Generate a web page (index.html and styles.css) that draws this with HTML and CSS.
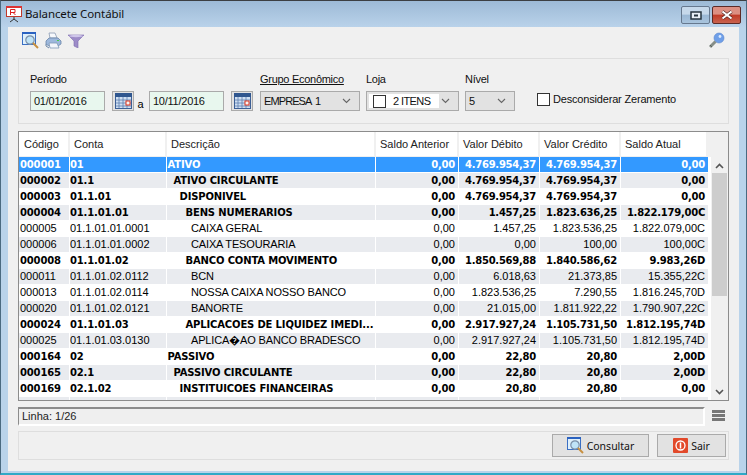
FILE: index.html
```html
<!DOCTYPE html>
<html lang="pt-BR">
<head>
<meta charset="utf-8">
<title>Balancete Contábil</title>
<link rel="stylesheet" href="styles.css">
</head>
<body>
<div class="window">
  <header class="titlebar">
    <svg class="app-icon" width="16" height="17" viewBox="0 0 16 17"><rect x="0.5" y="0.5" width="15" height="10" fill="#fff" stroke="#c0392b"/><rect x="0" y="0" width="16" height="2" fill="#d33"/><path d="M4.500 9V3.500h4.500v3H4.500M7 6.500l2.500 2.500" stroke="#d22" fill="none"/><path d="M8 11v2M8 13l-4 3M8 13l4 3" stroke="#333"/></svg>
    <span class="title">Balancete Contábil</span>
    <div class="win-btns">
      <div class="win-btn restore"><svg width="12" height="9" viewBox="0 0 12 9"><rect x="1" y="1" width="10" height="7" fill="#e8eff6" stroke="#27343f" stroke-width="1.500"/><rect x="4" y="3.500" width="4" height="2" fill="#27343f"/></svg></div>
      <div class="win-btn close"><svg width="14" height="10" viewBox="0 0 14 10"><path d="M2.500 1.500l9 7M11.500 1.500l-9 7" stroke="#4a1f1a" stroke-width="3.400"/><path d="M2.500 1.500l9 7M11.500 1.500l-9 7" stroke="#fff" stroke-width="2.200"/></svg></div>
    </div>
  </header>
  <main class="client">
    <div class="toolbar">
      <svg width="17" height="17" viewBox="0 0 17 17"><rect x="0.5" y="0.5" width="13" height="12" fill="#dff0fb" stroke="#3a6fc4"/><rect x="0" y="0" width="14" height="2" fill="#2b62c0"/><circle cx="8" cy="8" r="4.2" fill="#bfe3f7" stroke="#7a8fa8" stroke-width="1.2"/><path d="M11 11l5 5" stroke="#c89040" stroke-width="2"/></svg>
      <svg width="17" height="17" viewBox="0 0 17 17"><path d="M4 1h6l2 5H5z" fill="#f7f9fc" stroke="#8a9bb2" stroke-width="0.800"/><path d="M1 9l3-3h9l3 3v3l-3 2H4l-3-2z" fill="#9db8dc" stroke="#6b86a8" stroke-width="0.800"/><path d="M4 11h8l2 5H5z" fill="#f2f6fb" stroke="#7f97b6" stroke-width="0.800"/><path d="M1 12v2l3 2" fill="none" stroke="#6b86a8"/><rect x="12" y="8" width="2" height="1" fill="#4c4"/></svg>
      <svg width="16" height="14" viewBox="0 0 16 14"><path d="M0 1h16L10 7v7L6 12V7z" fill="#9d8cc8" stroke="#7d6cb0" stroke-width="0.6"/><ellipse cx="8" cy="2" rx="7" ry="1.2" fill="#cfc6ea"/></svg>
      <span class="spacer"></span>
      <svg width="17" height="17" viewBox="0 0 17 17"><circle cx="11" cy="6" r="5" fill="#6f9fe8" stroke="#5a86cc" stroke-width="0.6"/><circle cx="12" cy="4.5" r="1.4" fill="#dcebff"/><path d="M7.5 9.5L2 15" stroke="#868e88" stroke-width="3"/><path d="M2 13l2 2" stroke="#5c625e"/></svg>
    </div>

    <section class="filters">
      <div class="field f-date">
        <label class="lbl">Período</label>
        <div class="date-row">
          <div class="input date">01/01/2016</div>
          <button class="cal-btn"><svg width="17" height="16" viewBox="0 0 17 16"><rect x="0.5" y="1.5" width="16" height="14" fill="#cfdff2" stroke="#3d5f95"/><rect x="0" y="0" width="17" height="4" fill="#2f568f"/><path d="M4 4v11M8 4v11M12 4v11M1 7h15M1 10h15M1 13h15" stroke="#5d7db0" stroke-width="0.8"/><rect x="11" y="8" width="4" height="4" fill="#f5f5f5" stroke="#e0351c"/></svg></button>
          <span class="sep">a</span>
          <div class="input date">10/11/2016</div>
          <button class="cal-btn"><svg width="17" height="16" viewBox="0 0 17 16"><rect x="0.5" y="1.5" width="16" height="14" fill="#cfdff2" stroke="#3d5f95"/><rect x="0" y="0" width="17" height="4" fill="#2f568f"/><path d="M4 4v11M8 4v11M12 4v11M1 7h15M1 10h15M1 13h15" stroke="#5d7db0" stroke-width="0.8"/><rect x="11" y="8" width="4" height="4" fill="#f5f5f5" stroke="#e0351c"/></svg></button>
        </div>
      </div>
      <div class="field f-grupo">
        <label class="lbl underline">Grupo Econômico</label>
        <div class="input select w100"><span class="caps">EMPRESA 1</span><svg class="chev" width="9" height="6" viewBox="0 0 9 6"><path d="M1 1l3.500 3.500L8 1" fill="none" stroke="#666" stroke-width="1.100"/></svg></div>
      </div>
      <div class="field f-loja">
        <label class="lbl">Loja</label>
        <div class="input select w93"><span class="loja-inner"><span class="box"></span><span class="caps-s">2 ITENS</span></span><svg class="chev" width="9" height="6" viewBox="0 0 9 6"><path d="M1 1l3.500 3.500L8 1" fill="none" stroke="#666" stroke-width="1.100"/></svg></div>
      </div>
      <div class="field f-nivel">
        <label class="lbl">Nível</label>
        <div class="input select w50"><span>5</span><svg class="chev" width="9" height="6" viewBox="0 0 9 6"><path d="M1 1l3.500 3.500L8 1" fill="none" stroke="#666" stroke-width="1.100"/></svg></div>
      </div>
      <div class="check"><span class="box"></span><span class="check-text">Desconsiderar Zeramento</span></div>
    </section>

    <section class="grid">
      <div class="grid-body">
        <table class="data">
          <colgroup><col class="c1"><col class="c2"><col class="c3"><col class="c4"><col class="c5"><col class="c6"><col class="c7"></colgroup>
          <thead><tr><th>Código</th><th>Conta</th><th>Descrição</th><th>Saldo Anterior</th><th>Valor Débito</th><th>Valor Crédito</th><th>Saldo Atual</th></tr></thead>
          <tbody>
            <tr class="b sel"><td>000001</td><td>01</td><td class="l0">ATIVO</td><td class="n">0,00</td><td class="n">4.769.954,37</td><td class="n">4.769.954,37</td><td class="n">0,00</td></tr>
            <tr class="b alt"><td>000002</td><td>01.1</td><td class="l1">ATIVO CIRCULANTE</td><td class="n">0,00</td><td class="n">4.769.954,37</td><td class="n">4.769.954,37</td><td class="n">0,00</td></tr>
            <tr class="b"><td>000003</td><td>01.1.01</td><td class="l2">DISPONIVEL</td><td class="n">0,00</td><td class="n">4.769.954,37</td><td class="n">4.769.954,37</td><td class="n">0,00</td></tr>
            <tr class="b alt"><td>000004</td><td>01.1.01.01</td><td class="l3">BENS NUMERARIOS</td><td class="n">0,00</td><td class="n">1.457,25</td><td class="n">1.823.636,25</td><td class="n">1.822.179,00C</td></tr>
            <tr><td>000005</td><td>01.1.01.01.0001</td><td class="l4">CAIXA GERAL</td><td class="n">0,00</td><td class="n">1.457,25</td><td class="n">1.823.536,25</td><td class="n">1.822.079,00C</td></tr>
            <tr class="alt"><td>000006</td><td>01.1.01.01.0002</td><td class="l4">CAIXA TESOURARIA</td><td class="n">0,00</td><td class="n">0,00</td><td class="n">100,00</td><td class="n">100,00C</td></tr>
            <tr class="b"><td>000008</td><td>01.1.01.02</td><td class="l3">BANCO CONTA MOVIMENTO</td><td class="n">0,00</td><td class="n">1.850.569,88</td><td class="n">1.840.586,62</td><td class="n">9.983,26D</td></tr>
            <tr class="alt"><td>000011</td><td>01.1.01.02.0112</td><td class="l4">BCN</td><td class="n">0,00</td><td class="n">6.018,63</td><td class="n">21.373,85</td><td class="n">15.355,22C</td></tr>
            <tr><td>000013</td><td>01.1.01.02.0114</td><td class="l4">NOSSA CAIXA NOSSO BANCO</td><td class="n">0,00</td><td class="n">1.823.536,25</td><td class="n">7.290,55</td><td class="n">1.816.245,70D</td></tr>
            <tr class="alt"><td>000020</td><td>01.1.01.02.0121</td><td class="l4">BANORTE</td><td class="n">0,00</td><td class="n">21.015,00</td><td class="n">1.811.922,22</td><td class="n">1.790.907,22C</td></tr>
            <tr class="b"><td>000024</td><td>01.1.01.03</td><td class="l3">APLICACOES DE LIQUIDEZ IMEDI...</td><td class="n">0,00</td><td class="n">2.917.927,24</td><td class="n">1.105.731,50</td><td class="n">1.812.195,74D</td></tr>
            <tr class="alt"><td>000025</td><td>01.1.01.03.0130</td><td class="l4">APLICA�AO BANCO BRADESCO</td><td class="n">0,00</td><td class="n">2.917.927,24</td><td class="n">1.105.731,50</td><td class="n">1.812.195,74D</td></tr>
            <tr class="b"><td>000164</td><td>02</td><td class="l0">PASSIVO</td><td class="n">0,00</td><td class="n">22,80</td><td class="n">20,80</td><td class="n">2,00D</td></tr>
            <tr class="b alt"><td>000165</td><td>02.1</td><td class="l1">PASSIVO CIRCULANTE</td><td class="n">0,00</td><td class="n">22,80</td><td class="n">20,80</td><td class="n">2,00D</td></tr>
            <tr class="b"><td>000169</td><td>02.1.02</td><td class="l2">INSTITUICOES FINANCEIRAS</td><td class="n">0,00</td><td class="n">20,80</td><td class="n">20,80</td><td class="n">0,00</td></tr>
            <tr class="alt"><td></td><td></td><td></td><td></td><td></td><td></td><td></td></tr>
          </tbody>
        </table>
      </div>
      <div class="scroll">
        <svg width="9" height="6" viewBox="0 0 9 6"><path d="M1 5l3.500-3.500L8 5" fill="none" stroke="#555" stroke-width="1.600"/></svg>
        <div class="track"><div class="thumb"></div></div>
        <svg width="9" height="6" viewBox="0 0 9 6"><path d="M1 1l3.500 3.500L8 1" fill="none" stroke="#555" stroke-width="1.600"/></svg>
      </div>
    </section>

    <div class="status-row">
      <div class="status">Linha: 1/26</div>
      <div class="menu-ico"><span></span><span></span><span></span></div>
    </div>

    <footer class="actions">
      <button class="btn b-cons"><svg width="17" height="17" viewBox="0 0 17 17"><rect x="0.5" y="0.500" width="13" height="12" fill="#dff0fb" stroke="#3a6fc4"/><rect x="0" y="0" width="14" height="2" fill="#2b62c0"/><circle cx="8" cy="8" r="4.200" fill="#bfe3f7" stroke="#7a8fa8" stroke-width="1.200"/><path d="M11 11l5 5" stroke="#c89040" stroke-width="2"/></svg><span>Consultar</span></button>
      <button class="btn b-sair"><svg width="15" height="15" viewBox="0 0 15 15"><rect width="15" height="15" rx="1" fill="#e2492a"/><circle cx="7.500" cy="7.500" r="4.500" fill="none" stroke="#fff" stroke-width="1.300"/><path d="M7.500 4.500v6" stroke="#fff" stroke-width="1.500"/></svg><span>Sair</span></button>
    </footer>
  </main>
</div>
</body>
</html>
```

FILE: styles.css
```css
html, body { margin: 0; padding: 0; height: 100%; background: #fff; }
body { font-family: "Liberation Sans", Arial, sans-serif; font-size: 11px; color: #000; overflow: hidden; }
* { box-sizing: border-box; }
.window {
  width: 747px; height: 475px; display: flex; flex-direction: column;
  background: #b9d3ea; border-top: 1px solid #3c3f42; border-left: 1px solid #4a6a80; border-right: 1px solid #4a6a80;
  border-bottom: 2px solid #2fa9c6;
}
.titlebar {
  height: 26px; flex: none; display: flex; align-items: flex-start; padding-left: 5px;
  background: linear-gradient(#9dbad6, #b9d2ea);
}
.app-icon { margin-top: 5px; }
.title { font-family: "Noto Sans", sans-serif; font-size: 11.500px; letter-spacing: -0.1px; margin: 5px 0 0 3px; color: #111; line-height: 16px; }
.win-btns { margin-left: auto; margin-right: 5px; display: flex; gap: 2px; }
.win-btn { height: 18px; margin-top: 5px; border: 1px solid #66788e; border-radius: 2px; display: flex; align-items: center; justify-content: center; }
.restore { width: 29px; background: linear-gradient(#c6d8ea 45%, #9ab7d4 50%, #a9c4dd); }
.close { width: 29px; background: linear-gradient(#dc8f82 45%, #c03a26 50%, #c9624e); border-color: #5c2a26; }

.client {
  flex: 1; margin: 0 7px 2px 7px; background: #f0f0f0; padding: 3px 10px 8px 10px;
  display: flex; flex-direction: column; min-height: 0;
}
.toolbar { height: 21px; display: flex; align-items: center; gap: 6px; padding-left: 4px; padding-right: 4px; flex: none; }
.spacer { flex: 1; }

.filters {
  margin-top: 7px; height: 66px; flex: none; border: 1px solid #dedede; display: flex; align-items: flex-start;
  padding: 13px 0 0 11px;
}
.field { display: flex; flex-direction: column; }
.lbl { height: 14px; line-height: 14px; color: #111; margin-bottom: 5px; letter-spacing: -0.28px; align-self: flex-start; }
.underline { text-decoration: underline; }
.input { height: 20px; border: 1px solid #aaa; line-height: 18px; padding-left: 3px; color: #111; }
.date { width: 75px; background: #e8f7ee; letter-spacing: -0.25px; }
.date-row { display: flex; align-items: center; }
.cal-btn { width: 22px; height: 20px; margin: 0 0 0 7px; padding: 0; border: 1px solid #aaa; background: #e2e2e2; display: flex; align-items: center; justify-content: center; }
.sep { width: 15px; text-align: center; padding: 6px 2px 0 0; }
.select { background: #e2e2e2; display: flex; align-items: center; justify-content: space-between; padding-right: 8px; }
.w100 { width: 100px; }
.w93 { width: 93px; }
.w50 { width: 50px; }
.f-date { width: 230px; }
.f-grupo { width: 106px; }
.f-loja { width: 99px; }
.f-nivel { width: 72px; }
.caps { letter-spacing: -0.9px; word-spacing: 2px; }
.caps-s { letter-spacing: -0.6px; }
.loja-inner { background: #fff; display: flex; align-items: center; gap: 7px; width: 70px; height: 14px; padding-left: 4px; margin-left: -1px; }
.box { width: 13px; height: 13px; border: 1px solid #333; background: #fff; display: inline-block; flex: none; }
.check { display: flex; align-items: center; gap: 3px; margin-top: 20px; height: 14px; color: #111; }
.check-text { letter-spacing: -0.18px; line-height: 12px; }

.grid {
  margin-top: 7px; height: 270px; flex: none; border: 1px solid #8c8c8c; display: flex; background: #f0f0f0;
}
.grid-body { width: 692px; flex: none; overflow: hidden; background: #f0f0f0; }
.data { border-collapse: separate; border-spacing: 0; table-layout: fixed; width: 692px; }
.c1 { width: 51px; } .c2 { width: 97px; } .c3 { width: 209px; } .c4 { width: 83px; } .c5 { width: 81px; } .c6 { width: 81px; } .c7 { width: 90px; }
th {
  height: 25px; padding: 0 0 0 4px; font-weight: normal; text-align: left; color: #222; background: #fff;
  border-right: 2px solid #f0f0f0; border-bottom: 1px solid #f0f0f0; white-space: nowrap; overflow: hidden;
}
th:first-child { padding-left: 5px; }
th:last-child { border-right-width: 5px; }
td {
  height: 16px; padding: 0; border-right: 1px solid #fff; border-bottom: 1px solid #fff;
  line-height: 15px; white-space: nowrap; overflow: hidden; color: #000; background: #fff;
}
td:first-child { padding-left: 1px; }
td:last-child { border-right-width: 3px; }
tr.alt td { background: #e9ebef; }
tr.b td { font-family: "DejaVu Sans", sans-serif; font-weight: bold; font-size: 10px; color: #000; letter-spacing: -0.15px; }
tr.b td.n { letter-spacing: -0.25px; }
tr.sel td { background: #3399ff; color: #fff; }
td.n { text-align: right; padding-right: 3px; }
td.l0 { padding-left: 0.500px; }
td.l1 { padding-left: 6.500px; }
td.l2 { padding-left: 12.500px; }
td.l3 { padding-left: 18.500px; }
td.l4 { padding-left: 24px; letter-spacing: -0.15px; }

.scroll { flex: 1; display: flex; flex-direction: column; align-items: center; padding: 31px 1px 5px 1px; gap: 4px; height: 268px; }
.scroll svg { flex: none; }
.track { width: 15px; flex: 1; background: #f0f0f0; }
.thumb { height: 123px; background: #cdcdcd; }

.status-row { margin-top: 6px; height: 19px; display: flex; flex: none; }
.status { width: 687px; height: 19px; background: #efefef; border-top: 2px solid #8c8c8c; border-left: 1px solid #8c8c8c; border-right: 2px solid #fff; border-bottom: 2px solid #fff; padding-left: 3px; line-height: 15px; color: #222; }
.menu-ico { margin-left: 7px; width: 13px; padding-top: 3px; display: flex; flex-direction: column; gap: 1px; }
.menu-ico span { height: 3px; background: #777; display: block; }

.actions { margin-top: 5px; height: 29px; flex: none; border: 1px solid #dedede; display: flex; justify-content: flex-end; gap: 8px; padding: 2px 2px 0 0; }
.btn { height: 23px; border: 1px solid #aaa; background: #e2e2e2; display: flex; align-items: center; justify-content: center; gap: 3px; padding: 0; font: 10.500px "Noto Sans", sans-serif; color: #111; }
.b-cons { width: 97px; }
.b-sair { width: 69px; }
```
